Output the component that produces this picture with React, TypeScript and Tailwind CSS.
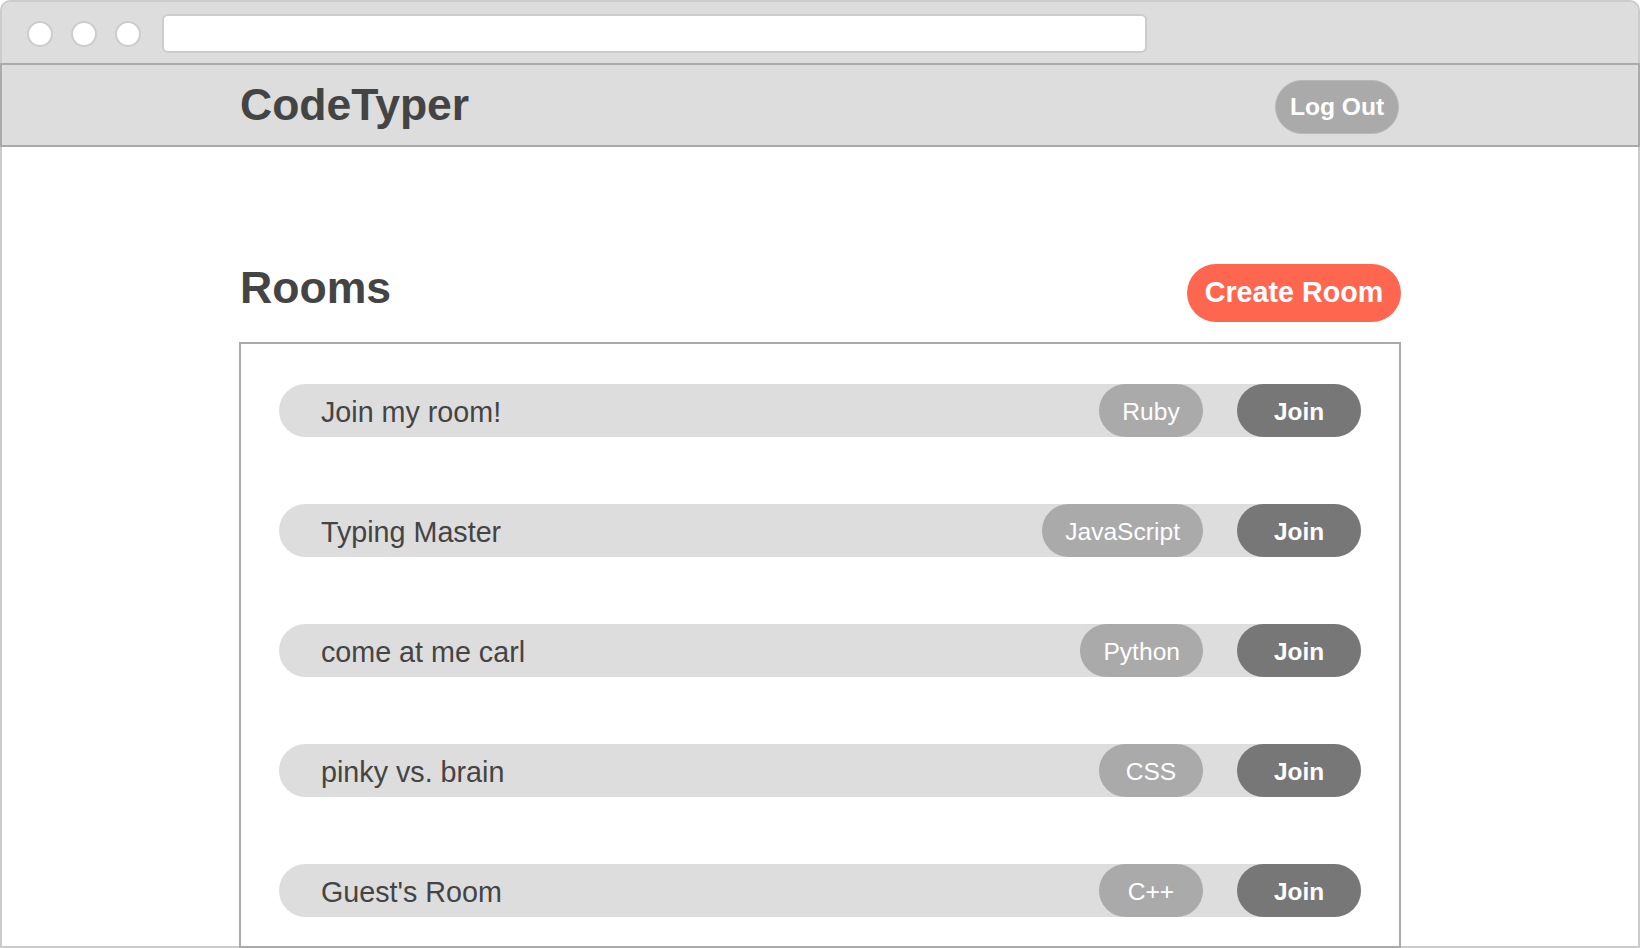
const rooms = [
  { name: "Join my room!", lang: "Ruby" },
  { name: "Typing Master", lang: "JavaScript" },
  { name: "come at me carl", lang: "Python" },
  { name: "pinky vs. brain", lang: "CSS" },
  { name: "Guest's Room", lang: "C++" },
];

function RoomRow({ name, lang }: { name: string; lang: string }) {
  return (
    <div className="flex h-[53px] items-center rounded-full bg-[#dddddd]">
      <span className="flex-1 pl-[42px] pt-[3px] text-[28.7px] leading-none text-[#444444]">{name}</span>
      <span className="flex h-full min-w-[104px] items-center justify-center rounded-full bg-[#aaaaaa] px-[23px] pt-[3px] text-[24.6px] leading-none text-white">
        {lang}
      </span>
      <button className="ml-[34px] flex h-full w-[124px] items-center justify-center rounded-full bg-[#777777] pt-[3px] text-[24.4px] font-bold leading-none text-white">
        Join
      </button>
    </div>
  );
}

export default function App() {
  return (
    <div
      className="flex h-[948px] w-[1640px] flex-col overflow-hidden bg-white"
      style={{ fontFamily: '"Liberation Sans", Arial, sans-serif' }}
    >
      {/* browser chrome */}
      <div className="flex h-[63px] shrink-0 items-center rounded-t-[10px] border-x-2 border-t-2 border-[#cccccc] bg-[#dddddd] pl-[25px] pt-[2px]">
        <div className="flex gap-[18px]">
          <span className="h-[26px] w-[26px] rounded-full border-2 border-[#cccccc] bg-white" />
          <span className="h-[26px] w-[26px] rounded-full border-2 border-[#cccccc] bg-white" />
          <span className="h-[26px] w-[26px] rounded-full border-2 border-[#cccccc] bg-white" />
        </div>
        <div className="ml-[21px] h-[39px] w-[985px] rounded-[6px] border-2 border-[#cccccc] bg-white" />
      </div>

      {/* nav */}
      <div className="h-[84px] shrink-0 border-2 border-[#aaaaaa] bg-[#dddddd]">
        <div className="mx-auto flex h-full w-[1162px] items-center justify-between pr-[2px]">
          <h1 className="pl-[1px] text-[44.5px] font-bold leading-none text-[#444444]">CodeTyper</h1>
          <button className="mt-[4px] h-[54px] w-[124px] rounded-full border border-[#b8b8b8] bg-[#aaaaaa] text-[24.6px] font-bold text-white">
            Log Out
          </button>
        </div>
      </div>

      {/* main */}
      <div className="flex min-h-0 flex-1 flex-col border-x-2 border-b-2 border-[#cccccc]">
        <div className="mx-auto flex min-h-0 w-[1162px] flex-1 flex-col pt-[117px]">
          <div className="mb-[20px] flex items-start justify-between">
            <h2 className="mt-[2px] pl-[1px] text-[44.6px] font-bold leading-none text-[#444444]">Rooms</h2>
            <button className="h-[58px] w-[214px] rounded-full bg-[#ff6650] text-[28.7px] font-bold text-white">
              Create Room
            </button>
          </div>
          <div className="-mb-[2px] min-h-0 flex-1 overflow-hidden border-2 border-[#aaaaaa] px-[38px] pt-[40px]">
            <div className="flex flex-col gap-[67px]">
              {rooms.map((r) => (
                <RoomRow key={r.name} name={r.name} lang={r.lang} />
              ))}
            </div>
          </div>
        </div>
      </div>
    </div>
  );
}
